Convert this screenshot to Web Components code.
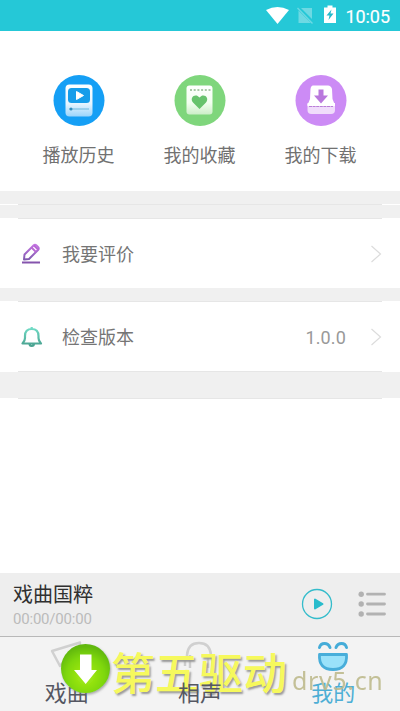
<!DOCTYPE html>
<html lang="zh-CN">
<head>
<meta charset="utf-8">
<title>我的</title>
<style>
html,body{margin:0;height:100%;overflow:hidden;background:#fff}
body{font-family:Roboto,"Noto Sans CJK SC",sans-serif;color:#757575}
</style>
</head>
<body>
<profile-screen></profile-screen>
<script>
function define(name, html) {
  const t = document.createElement('template');
  t.innerHTML = html;
  customElements.define(name, class extends HTMLElement {
    constructor() {
      super();
      this.attachShadow({mode: 'open'}).appendChild(t.content.cloneNode(true));
    }
  });
}

define('status-bar', `
<style>
:host{display:flex;height:31px;flex:none;background:#25c8d7;color:#fff;align-items:center;justify-content:flex-end;box-sizing:border-box;padding-right:10px}
svg{flex:none}span{font-size:18px;line-height:31px;letter-spacing:-.05px;font-weight:400;padding-top:2px;-webkit-text-stroke:.15px #fff}
</style>
<svg width="84" height="31" viewBox="261 0 84 31">
<path d="M266 10Q277.500 4 289 10L277.500 24Z" fill="#fff"/>
<path d="M298.500 10.500 311 23H298.500ZM301 8H312V19Z" fill="#6dd9e3"/><path d="M297.500 8 312.500 23.500" stroke="#6dd9e3" stroke-width="1.300"/>
<path d="M324 7.500H327.500V5.500H332.500V7.500H336V23H324Z" fill="#fff"/><path d="M331.500 9.500 326.500 15.500H329.500L328.500 20 333.500 13.500H330.500Z" fill="#25b9ca"/>
</svg><span>10:05</span>`);

define('shortcut-item', `
<style>
:host{display:flex;flex-direction:column;align-items:center;width:121px}
::slotted(svg){display:block;width:52px;height:52px}
span{font-size:18px;line-height:26px;margin-top:17px;color:#717171}
</style><slot name="icon"></slot><span><slot></slot></span>`);

define('section-gap', `
<style>
:host{display:flex;flex:none;flex-direction:column;justify-content:flex-end;background:#f0f0f0;height:14px}
i{display:block;height:1px;background:linear-gradient(90deg,#fff 18px,#e6e6e6 18px,#e6e6e6 382px,#fff 382px)}
</style><i></i>`);

define('setting-row', `
<style>
:host{display:flex;flex:none;align-items:center;height:69px;box-sizing:border-box;padding:2px 18px 0 20px;background:#fff;font-size:18px}
::slotted(svg){width:24px;height:24px;display:block;margin-right:18px;margin-top:-2px}
.label{flex:1;line-height:26px;padding-top:1px}.value{color:#999;margin-right:24px;letter-spacing:.15px}
svg{margin-top:-2px}
</style><slot name="icon"></slot><span class="label"><slot></slot></span><span class="value"><slot name="value"></slot></span>
<svg width="12" height="18" viewBox="0 0 12 18"><path d="M1.500 1 10.500 9 1.500 17" fill="none" stroke="#dcdcdc" stroke-width="1.200"/></svg>`);

define('player-bar', `
<style>
:host{display:flex;flex:none;height:64px;box-sizing:border-box;background:#eee;border-bottom:1px solid #b8b8b8;padding:0 13px 0 13px;align-items:flex-start}
.info{flex:1}.title{font-size:20px;line-height:28px;color:#303030;margin-top:8px}.time{font-size:15px;line-height:18px;color:#bbb;margin-top:1px;letter-spacing:-.2px}
svg{display:block;margin-top:15px}.list{margin-left:25px}
</style>
<div class="info"><div class="title">戏曲国粹</div><div class="time">00:00/00:00</div></div>
<svg width="32" height="32" viewBox="0 0 32 32"><circle cx="16" cy="16" r="14.500" fill="none" stroke="#34bccb" stroke-width="1.300"/><path d="M14 11.500V20.500L21.500 16Z" fill="#29bccc" stroke="#29bccc" stroke-width="2" stroke-linejoin="round"/></svg>
<svg class="list" width="29" height="32" viewBox="0 0 29 32"><g fill="#b2b2b2"><circle cx="3.200" cy="6.200" r="2.700"/><circle cx="3.200" cy="16" r="2.700"/><circle cx="3.200" cy="26" r="2.700"/></g><path d="M9.500 6.200H26.500M9.500 16H26.500M9.500 26H26.500" stroke="#b2b2b2" stroke-width="2.800" stroke-linecap="round"/></svg>`);

define('tab-item', `
<style>
:host{display:flex;flex:1;flex-direction:column;align-items:center;color:#555762}
::slotted(svg){display:block;width:44px;height:36px}
span{font-size:22px;line-height:30px;margin-top:6px;position:relative;z-index:2}
</style><slot name="icon"></slot><span><slot></slot></span>`);

define('site-mark', `
<style>
:host{display:block;position:absolute;inset:0;pointer-events:none}
.ball{position:absolute;left:59px;top:5px;z-index:3}
.name,.site{position:absolute;white-space:nowrap}
.name{left:111px;top:8px;z-index:1;font:500 44px/52px "Noto Sans CJK SC",sans-serif;color:#f6f95c;text-shadow:1.500px 2px 2px #999}
.site{left:292px;top:26px;z-index:3;font:25px/34px "Noto Sans",sans-serif;letter-spacing:.65px;color:#bdb98b;opacity:.88}
</style>
<svg class="ball" width="56" height="56" viewBox="0 0 56 56"><defs><radialGradient id="g" cx=".5" cy=".65" r=".6"><stop stop-color="#a9ed16"/><stop offset=".65" stop-color="#7ed70c"/><stop offset="1" stop-color="#62b90b"/></radialGradient><filter id="s" x="-.2" y="-.2" width="1.500" height="1.500"><feDropShadow dx="1" dy="1.500" stdDeviation="1.200" flood-color="#777" flood-opacity=".6"/></filter></defs><circle cx="26.500" cy="26.500" r="24.500" fill="url(#g)" filter="url(#s)"/><path d="M21 12.500H32.500V28H38L26.700 42 15 28H21Z" fill="#fff"/></svg>
<span class="name">第五驱动</span><span class="site">drv5.cn</span>`);

define('profile-screen', `
<style>
:host{display:flex;flex-direction:column;width:400px;height:711px;background:#fff;overflow:hidden}
.shortcuts{display:flex;flex:none;height:160px;box-sizing:border-box;padding:43px 19px 0 18px}
.last{height:27px}.hairline{height:1px}
.space{flex:1}
.tabs{display:flex;flex:none;height:74px;background:#f3f3f3;position:relative}
tab-item[active]{color:#4daed5}
</style>
<status-bar></status-bar>
<div class="shortcuts">
<shortcut-item><svg slot="icon" viewBox="0 0 52 52"><defs><linearGradient id="b" x2="0" y2="1"><stop stop-color="#fff"/><stop offset=".6" stop-color="#e7f5ff"/><stop offset="1" stop-color="#9bd4fb"/></linearGradient></defs><circle cx="26" cy="26.500" r="25.500" fill="#159ff5"/><rect x="12.500" y="10.500" width="27" height="32" rx="4" fill="url(#b)"/><rect x="15" y="14" width="22" height="15" rx="3.500" fill="#169dea"/><path d="M23.500 17.500V25.500L30.500 21.500Z" fill="#fff" stroke="#fff" stroke-linejoin="round"/><path d="M16 35H36" stroke="#6fb9dd"/><circle cx="18" cy="35" r="1.500" fill="#308dbe"/></svg>播放历史</shortcut-item>
<shortcut-item><svg slot="icon" viewBox="0 0 52 52"><defs><linearGradient id="n" x2="0" y2="1"><stop stop-color="#fff"/><stop offset=".6" stop-color="#f2fff0"/><stop offset="1" stop-color="#cceec8"/></linearGradient></defs><circle cx="26" cy="26.500" r="25.500" fill="#7fd67c"/><rect x="12.500" y="11.500" width="26" height="29" rx="3" fill="url(#n)"/><path d="M16 16H37" stroke="#8fb88c" stroke-width="1.500" stroke-dasharray="2 1.700"/><path d="M25.500 35 19 28.500C15 23.500 21.500 18.500 25.500 23.500C29.500 18.500 36 23.500 32 28.500Z" fill="#67c36d"/></svg>我的收藏</shortcut-item>
<shortcut-item><svg slot="icon" viewBox="0 0 52 52"><circle cx="26" cy="26.500" r="25.500" fill="#cc8bf5"/><path d="M18 11.500H33Q36 11.500 37 15L37.500 25 40 31H12.500L15 25 15.500 15Q16 11.500 18 11.500Z" fill="#fff"/><path d="M12.500 30H40V36Q40 40 36 40H16.500Q12.500 40 12.500 36Z" fill="#f0dcfb"/><path d="M12.500 29H40V32H12.500Z" fill="#fff"/><path d="M14 32.500H38" stroke="#b97ed7" stroke-dasharray="3 .6"/><path d="M23.500 15.500H28.500V21.500H33L26 29.500 19 21.500H23.500Z" fill="#b978dd"/></svg>我的下载</shortcut-item>
</div>
<section-gap></section-gap><section-gap></section-gap>
<setting-row><svg slot="icon" viewBox="0 0 24 24" fill="none" stroke-linejoin="round"><defs><linearGradient id="p" x2="0" y2="1"><stop stop-color="#c375e2"/><stop offset="1" stop-color="#805baf"/></linearGradient></defs><path d="M4 17.500 4.500 12.500 13.500 3.500Q15 2 16.500 3.500L18 5Q19.500 6.500 18 8L9 17Z" stroke="url(#p)" stroke-width="2"/><path d="M11.500 5.500 16 10M14 3.500 18 7.500" stroke="#b967d5" stroke-width="1.800"/><path d="M2 20.500H20" stroke="#8554ad" stroke-width="2"/></svg>我要评价</setting-row>
<section-gap></section-gap>
<setting-row><svg slot="icon" viewBox="0 0 24 24" fill="none" stroke-linejoin="round"><defs><linearGradient id="e" x2="0" y2="1"><stop stop-color="#73dfc9"/><stop offset="1" stop-color="#49a18f"/></linearGradient></defs><path d="M11.700 2V4M2.500 18.500Q5 16 5 13V11Q5 4 11.700 4Q18.500 4 18.500 11V13Q18.500 16 21 18.500ZM9.500 18.500Q9.500 21 11.700 21Q14 21 14 18.500" stroke="url(#e)" stroke-width="2.200"/></svg>检查版本<span slot="value">1.0.0</span></setting-row>
<section-gap class="hairline"></section-gap><section-gap class="last"></section-gap>
<div class="space"></div>
<player-bar></player-bar>
<div class="tabs">
<tab-item><svg slot="icon" viewBox="45 637 44 36" fill="none"><path d="M52 651 80 642.500 76 665 65 660 60 666Z" stroke="#d0d0d0" stroke-width="2.500" stroke-linejoin="round"/></svg>戏曲</tab-item>
<tab-item><svg slot="icon" viewBox="178 637 44 36" fill="none"><path d="M187 659V655Q188 643 199 643Q210 643 211 655V659" stroke="#d0d0d0" stroke-width="2.500"/><path d="M185 657V666M190 655V668M208 655V668M213 657V666" stroke="#cdcdcd" stroke-width="2.500"/></svg>相声</tab-item>
<tab-item active><svg slot="icon" viewBox="311 637 44 36" fill="none"><path d="M319.500 647.500Q320.500 643.500 324.500 643.500Q328.500 643.500 330 647.500M336 647.500Q337.500 643.500 341.500 643.500Q345.500 643.500 346.500 647.500" stroke="#45acd8" stroke-width="3" stroke-linecap="round"/><path d="M319.500 654.500H346.500Q347.500 669.500 333 669.500Q318.500 669.500 319.500 654.500Z" fill="#9ae2fa" stroke="#48aeda" stroke-width="2.800" stroke-linejoin="round"/></svg>我的</tab-item>
<site-mark></site-mark>
</div>`);
</script>
</body>
</html>
